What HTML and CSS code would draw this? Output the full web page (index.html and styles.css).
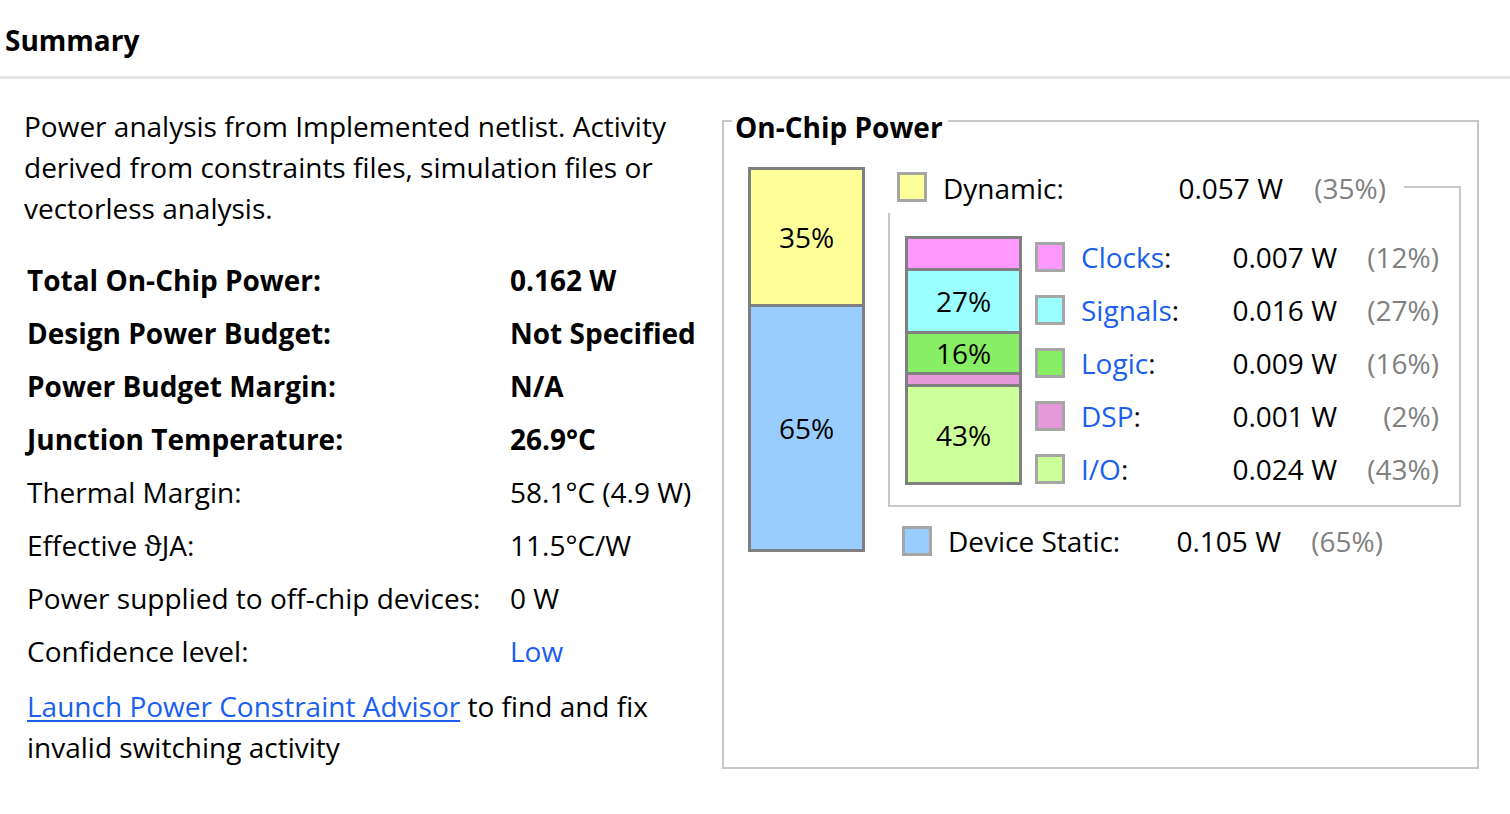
FILE: index.html
```html
<!DOCTYPE html>
<html lang="en">
<head>
<meta charset="utf-8">
<title>Summary</title>
<link rel="stylesheet" href="styles.css">
</head>
<body>
<div class="header"><h1 class="title">Summary</h1></div>
<div class="content">
  <div class="left">
    <p class="intro">Power analysis from Implemented netlist. Activity<br>derived from constraints files, simulation files or<br>vectorless analysis.</p>
    <div class="stats">
      <div class="k b">Total On-Chip Power:</div><div class="v b">0.162 W</div>
      <div class="k b">Design Power Budget:</div><div class="v b">Not Specified</div>
      <div class="k b">Power Budget Margin:</div><div class="v b">N/A</div>
      <div class="k b">Junction Temperature:</div><div class="v b">26.9°C</div>
      <div class="k">Thermal Margin:</div><div class="v">58.1°C (4.9 W)</div>
      <div class="k">Effective ϑJA:</div><div class="v">11.5°C/W</div>
      <div class="k">Power supplied to off-chip devices:</div><div class="v">0 W</div>
      <div class="k">Confidence level:</div><div class="v"><span class="link">Low</span></div>
    </div>
    <p class="advisor"><a class="ulink" href="#">Launch Power Constraint Advisor</a> to find and fix<br>invalid switching activity</p>
  </div>
  <div class="onchip">
    <div class="onchip-legend">On-Chip Power</div>
    <div class="chart">
      <div class="bar bar-main">
        <div class="seg c-dyn h-dyn">35%</div>
        <div class="seg c-static h-static">65%</div>
      </div>
      <div class="breakdown">
        <div class="dyn-row">
          <span class="swatch c-dyn sw-dyn"></span>
          <span class="lbl lbl-dyn">Dynamic:</span>
          <span class="val val-dyn">0.057 W</span>
          <span class="pct pct-dyn">(35%)</span>
          <span class="connector"></span>
        </div>
        <div class="dyn-box">
          <div class="bar bar-small">
            <div class="seg c-clk h-clk"></div>
            <div class="seg c-sig h-sig">27%</div>
            <div class="seg c-logic h-logic">16%</div>
            <div class="seg c-dsp h-dsp"></div>
            <div class="seg c-io h-io">43%</div>
          </div>
          <div class="legend">
            <span class="swatch c-clk"></span><span class="lbl"><span class="link">Clocks</span>:</span><span class="val">0.007 W</span><span class="pct">(12%)</span>
            <span class="swatch c-sig"></span><span class="lbl"><span class="link">Signals</span>:</span><span class="val">0.016 W</span><span class="pct">(27%)</span>
            <span class="swatch c-logic"></span><span class="lbl"><span class="link">Logic</span>:</span><span class="val">0.009 W</span><span class="pct">(16%)</span>
            <span class="swatch c-dsp"></span><span class="lbl"><span class="link">DSP</span>:</span><span class="val">0.001 W</span><span class="pct">(2%)</span>
            <span class="swatch c-io"></span><span class="lbl"><span class="link">I/O</span>:</span><span class="val">0.024 W</span><span class="pct">(43%)</span>
          </div>
        </div>
        <div class="static-row">
          <span class="swatch c-static"></span>
          <span class="lbl lbl-static">Device Static:</span>
          <span class="val val-static">0.105 W</span>
          <span class="pct pct-static">(65%)</span>
        </div>
      </div>
    </div>
  </div>
</div>
</body>
</html>
```
FILE: styles.css
```css
body {
  margin: 0;
  font-family: "Open Sans", "Noto Sans", sans-serif;
  font-size: 28px;
  color: #000;
  background: #fff;
}
.header {
  height: 76px;
  border-bottom: 3px solid #e6e6e6;
  display: flex;
  align-items: center;
  padding-left: 5px;
}
.title {
  margin: 0;
  font-size: 28px;
  font-weight: 700;
  line-height: 1;
  padding-top: 4px;
}
.content {
  display: flex;
  padding-left: 24px;
}
.left {
  width: 698px;
  padding-top: 27px;
}
.intro {
  margin: 0;
  line-height: 41px;
}
.stats {
  display: grid;
  grid-template-columns: 483px auto;
  grid-auto-rows: 53px;
  align-items: center;
  margin-top: 24px;
  padding-left: 3px;
}
.b { font-weight: 700; }
.link { color: #1a5ff0; }
.advisor {
  margin: 9px 0 0 3px;
  line-height: 41px;
}
.ulink {
  color: #1a5ff0;
  text-decoration: underline;
  text-underline-offset: 3px;
  text-decoration-thickness: 2px;
}
.onchip {
  position: relative;
  margin-top: 41px;
  width: 757px;
  height: 649px;
  box-sizing: border-box;
  border: 2px solid #c8c8c8;
  padding: 45px 0 0 24px;
}
.onchip-legend {
  position: absolute;
  top: -14px;
  left: 8px;
  padding: 0 5px 0 3px;
  background: #fff;
  font-weight: 700;
  line-height: 38px;
}
.chart {
  display: flex;
  gap: 23px;
  align-items: flex-start;
}
.bar {
  box-sizing: border-box;
  width: 117px;
  border: 3px solid #808080;
  display: flex;
  flex-direction: column;
}
.bar-main { height: 385px; }
.bar-small { height: 249px; flex: none; }
.seg {
  display: flex;
  align-items: center;
  justify-content: center;
  box-sizing: content-box;
  flex: none;
}
.seg + .seg { border-top: 3px solid #808080; }
.h-dyn { height: 134px; }
.h-static { height: 242px; }
.h-clk { height: 29px; }
.h-sig { height: 60px; }
.h-logic { height: 38px; }
.h-dsp { height: 9px; }
.h-io { height: 95px; }

.c-dyn { background: #ffff99; }
.c-static { background: #99ccff; }
.c-clk { background: #ff99ff; }
.c-sig { background: #99ffff; }
.c-logic { background: #88ee66; }
.c-dsp { background: #e699d9; }
.c-io { background: #ccff99; }

.swatch {
  display: block;
  box-sizing: border-box;
  width: 30px;
  height: 30px;
  border: 3px solid #a6a6a6;
  flex: none;
}
.val { text-align: right; white-space: nowrap; }
.pct { text-align: right; color: #808080; white-space: nowrap; }
.lbl { white-space: nowrap; }

.breakdown {
  width: 573px;
  display: flex;
  flex-direction: column;
}
.dyn-row {
  display: flex;
  height: 46px;
  align-items: flex-start;
}
.sw-dyn { margin: 5px 0 0 9px; }
.dyn-row .lbl, .dyn-row .val, .dyn-row .pct { line-height: 42px; }
.lbl-dyn { margin-left: 16px; width: 227px; }
.val-dyn { width: 113px; }
.pct-dyn { width: 103px; }
.connector {
  align-self: flex-end;
  flex: 1;
  margin-left: 18px;
  height: 27px;
  box-sizing: border-box;
  border-top: 2px solid #c8c8c8;
  border-right: 2px solid #c8c8c8;
}
.dyn-box {
  display: flex;
  align-items: flex-start;
  gap: 13px;
  height: 294px;
  box-sizing: border-box;
  border: 2px solid #c8c8c8;
  border-top: none;
  padding: 23px 0 0 15px;
}
.legend {
  display: grid;
  grid-template-columns: 30px 155px 117px 102px;
  grid-auto-rows: 53px;
  align-items: center;
  margin-top: -6px;
}
.legend .lbl { padding-left: 16px; }
.static-row {
  display: flex;
  align-items: center;
  height: 34px;
  margin-top: 17px;
  padding-left: 14px;
}
.lbl-static { margin-left: 16px; width: 212px; }
.val-static { width: 121px; }
.pct-static { width: 102px; }
```
